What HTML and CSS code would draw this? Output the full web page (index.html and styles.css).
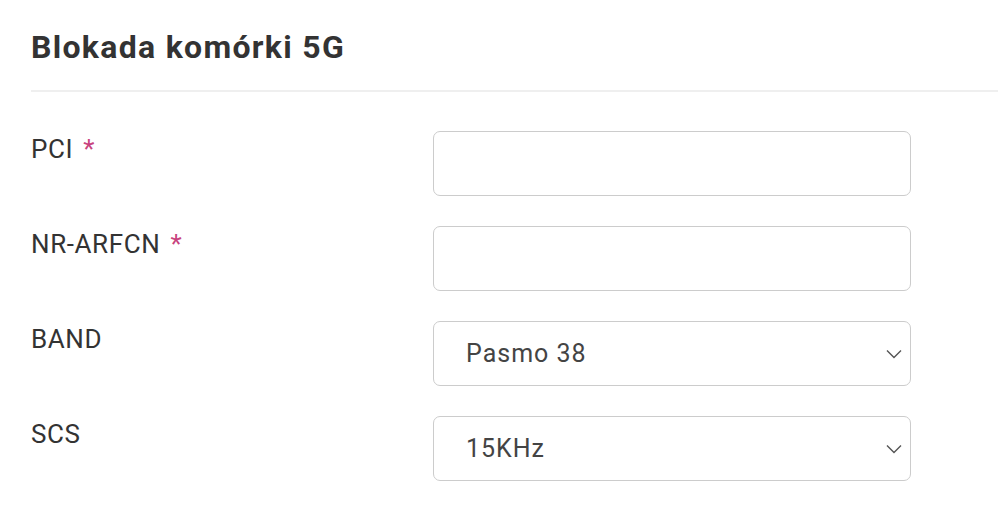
FILE: index.html
```html
<!DOCTYPE html>
<html lang="pl">
<head>
<meta charset="utf-8">
<link rel="stylesheet" href="styles.css">
</head>
<body>
<div class="page">
  <h1 class="title">Blokada komórki 5G</h1>
  <div class="divider"></div>
  <form class="form">
    <div class="row">
      <label class="label">PCI <span class="req">*</span></label>
      <div class="field"><input class="input" type="text"></div>
    </div>
    <div class="row">
      <label class="label">NR-ARFCN <span class="req">*</span></label>
      <div class="field"><input class="input" type="text"></div>
    </div>
    <div class="row">
      <label class="label">BAND</label>
      <div class="field select">
        <span class="value">Pasmo 38</span>
        <svg class="chev" width="16" height="10" viewBox="0 0 16 10"><path d="M1 1.5 L8 8.5 L15 1.5" fill="none" stroke="#555" stroke-width="1.4"/></svg>
      </div>
    </div>
    <div class="row">
      <label class="label">SCS</label>
      <div class="field select">
        <span class="value">15KHz</span>
        <svg class="chev" width="16" height="10" viewBox="0 0 16 10"><path d="M1 1.5 L8 8.5 L15 1.5" fill="none" stroke="#555" stroke-width="1.4"/></svg>
      </div>
    </div>
  </form>
</div>
</body>
</html>
```
FILE: styles.css
```css
html, body {
  margin: 0;
  padding: 0;
  background: #fff;
}
body {
  font-family: Roboto, "Liberation Sans", sans-serif;
  color: #333;
}
.page {
  padding-left: 31px;
}
.title {
  margin: 0;
  padding: 29px 0 24px;
  font-size: 32px;
  font-weight: 700;
  line-height: 37px;
  letter-spacing: 1.3px;
  color: #333;
}
.divider {
  height: 2px;
  background: #efefef;
}
.form {
  display: flex;
  flex-direction: column;
  gap: 30px;
  padding-top: 39px;
}
.row {
  display: grid;
  grid-template-columns: 402px 478px;
  align-items: start;
}
.label {
  font-size: 26px;
  line-height: 30px;
  padding-top: 3px;
  letter-spacing: 0.6px;
  color: #333;
}
.req {
  color: #c8437e;
  margin-left: 3px;
}
.field {
  height: 65px;
  box-sizing: border-box;
  border: 1.5px solid #cccccc;
  border-radius: 7px;
  background: #fff;
}
.input {
  display: block;
  width: 100%;
  height: 100%;
  border: 0;
  outline: none;
  background: transparent;
  padding: 0;
}
.select {
  display: flex;
  align-items: center;
  justify-content: space-between;
  padding: 0 8px 0 32px;
}
.value {
  font-size: 25px;
  letter-spacing: 1px;
  color: #444;
}
.chev {
  display: block;
}
```
